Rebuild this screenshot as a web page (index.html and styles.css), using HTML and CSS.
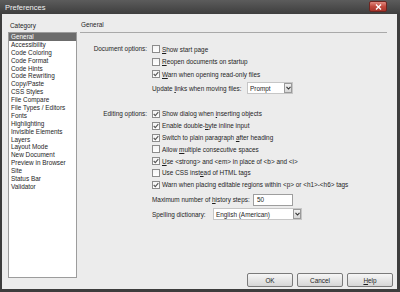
FILE: index.html
```html
<!DOCTYPE html>
<html lang="en">
<head>
  <meta charset="UTF-8" />
  <title>Preferences</title>
  <link rel="stylesheet" href="styles.css">
</head>
<body>
  <div class="window">
    <div class="titlebar">
      <span class="title">Preferences</span>
      <span class="close">
        <svg width="7" height="6" viewBox="0 0 7 6"><path d="M1 0.5 L6 5.5 M6 0.5 L1 5.5" stroke="#fff" stroke-width="1.4" fill="none"/></svg>
      </span>
    </div>

    <div class="frame">
      <!-- Category list -->
      <div class="sidebar">
        <div class="side-label">Category</div>
        <ul class="category-list">
          <li class="selected">General</li>
          <li>Accessibility</li>
          <li>Code Coloring</li>
          <li>Code Format</li>
          <li>Code Hints</li>
          <li>Code Rewriting</li>
          <li>Copy/Paste</li>
          <li>CSS Styles</li>
          <li>File Compare</li>
          <li>File Types / Editors</li>
          <li>Fonts</li>
          <li>Highlighting</li>
          <li>Invisible Elements</li>
          <li>Layers</li>
          <li>Layout Mode</li>
          <li>New Document</li>
          <li>Preview in Browser</li>
          <li>Site</li>
          <li>Status Bar</li>
          <li>Validator</li>
        </ul>
      </div>

      <!-- General panel -->
      <div class="main">
        <div class="main-title">General</div>

        <div class="section doc-section">
          <div class="section-label">Document options:</div>
          <div class="options">
            <div class="opt"><span class="box"></span><span><u>S</u>how start page</span></div>
            <div class="opt"><span class="box"></span><span><u>R</u>eopen documents on startup</span></div>
            <div class="opt"><span class="box checked"><svg width="6" height="6" viewBox="0 0 6 6"><path d="M0.7 3 L2.3 4.6 L5.3 1.2" stroke="#555" stroke-width="1.1" fill="none"/></svg></span><span><u>W</u>arn when opening read-only files</span></div>
            <div class="field-row update-row">
              <span class="field-label">Update <u>l</u>inks when moving files:</span>
              <span class="select prompt-select">
                <span>Prompt</span>
                <span class="arrow"><svg width="5" height="4" viewBox="0 0 5 4"><path d="M0.5 0.8 L2.5 3 L4.5 0.8" stroke="#333" stroke-width="1.1" fill="none"/></svg></span>
              </span>
            </div>
          </div>
        </div>

        <div class="section edit-section">
          <div class="section-label">Editing options:</div>
          <div class="options">
            <div class="opt"><span class="box checked"><svg width="6" height="6" viewBox="0 0 6 6"><path d="M0.7 3 L2.3 4.6 L5.3 1.2" stroke="#555" stroke-width="1.1" fill="none"/></svg></span><span>Show dialog when <u>i</u>nserting objects</span></div>
            <div class="opt"><span class="box checked"><svg width="6" height="6" viewBox="0 0 6 6"><path d="M0.7 3 L2.3 4.6 L5.3 1.2" stroke="#555" stroke-width="1.1" fill="none"/></svg></span><span>Enable double-<u>b</u>yte inline input</span></div>
            <div class="opt"><span class="box checked"><svg width="6" height="6" viewBox="0 0 6 6"><path d="M0.7 3 L2.3 4.6 L5.3 1.2" stroke="#555" stroke-width="1.1" fill="none"/></svg></span><span>Switch to plain paragraph <u>a</u>fter heading</span></div>
            <div class="opt"><span class="box"></span><span>Allow <u>m</u>ultiple consecutive spaces</span></div>
            <div class="opt"><span class="box checked"><svg width="6" height="6" viewBox="0 0 6 6"><path d="M0.7 3 L2.3 4.6 L5.3 1.2" stroke="#555" stroke-width="1.1" fill="none"/></svg></span><span><u>U</u>se &lt;strong&gt; and &lt;em&gt; in place of &lt;b&gt; and &lt;i&gt;</span></div>
            <div class="opt"><span class="box"></span><span>Use CSS inst<u>e</u>ad of HTML tags</span></div>
            <div class="opt"><span class="box checked"><svg width="6" height="6" viewBox="0 0 6 6"><path d="M0.7 3 L2.3 4.6 L5.3 1.2" stroke="#555" stroke-width="1.1" fill="none"/></svg></span><span>Warn when placing editable regions within &lt;p&gt; or &lt;h1&gt;-&lt;h6&gt; tags</span></div>
            <div class="field-row history-row">
              <span class="field-label history-label">Maximum number of <u>h</u>istory steps:</span>
              <span class="text-input">50</span>
            </div>
            <div class="field-row spell-row">
              <span class="field-label spell-label">Spelling dictionary:</span>
              <span class="select spell-select">
                <span>English (American)</span>
                <span class="arrow"><svg width="5" height="4" viewBox="0 0 5 4"><path d="M0.5 0.8 L2.5 3 L4.5 0.8" stroke="#333" stroke-width="1.1" fill="none"/></svg></span>
              </span>
            </div>
          </div>
        </div>

        <div class="buttons">
          <button class="btn">OK</button>
          <button class="btn">Cancel</button>
          <button class="btn"><u>H</u>elp</button>
        </div>
      </div>
    </div>
  </div>
</body>
</html>
```

FILE: styles.css
```css
* {
  box-sizing: border-box;
}

body {
  margin: 0;
  font-family: 'Liberation Sans', Arial, sans-serif;
  font-size: 6.4px;
  color: #1e1e1e;
  background: #ececec;
}

.window {
  width: 400px;
  height: 292px;
  display: flex;
  flex-direction: column;
  background: #ececec;
}

/* Title bar */
.titlebar {
  height: 14px;
  display: flex;
  justify-content: space-between;
  align-items: flex-start;
  padding: 0 13px 0 5px;
  background: linear-gradient(#5c5c5c, #3e3e3e);
}

.title {
  color: #f2f2f2;
  font-size: 7.5px;
  line-height: 15px;
}

.close {
  margin-top: 1px;
  width: 18px;
  height: 11px;
  border: 1px solid #6e2520;
  border-radius: 2px;
  background: linear-gradient(#e08a80, #c24a3e 50%, #a8342a);
  display: flex;
  align-items: center;
  justify-content: center;
}

/* Frame */
.frame {
  flex: 1;
  display: flex;
  border-style: solid;
  border-color: #3d3d3d;
  border-width: 0 3px 3px 2px;
}

.sidebar {
  width: 69px;
  margin-left: 6px;
  display: flex;
  flex-direction: column;
}

.side-label {
  height: 18px;
  padding: 7.5px 0 0 2px;
  line-height: 8px;
}

.category-list {
  height: 246px;
  margin: 0;
  padding: 0;
  list-style: none;
  background: #fff;
  border: 1px solid #9c9c9c;
}

.category-list li {
  height: 7.9px;
  line-height: 7.9px;
  padding-left: 2px;
  white-space: nowrap;
}

.category-list .selected {
  background: #6c6c6c;
  color: #fff;
}

/* Main panel */
.main {
  flex: 1;
  margin: 0 4px 0 3px;
  display: flex;
  flex-direction: column;
}

.main-title {
  height: 19px;
  padding: 7px 0 0 1px;
  line-height: 8px;
  margin-right: 6px;
  border-bottom: 1px solid #a9a9a9;
}

.section {
  display: grid;
  grid-template-columns: 72px 1fr;
}

.doc-section {
  margin-top: 9.75px;
}

.edit-section {
  margin-top: 12.35px;
}

.section-label {
  text-align: right;
  padding-right: 5px;
  white-space: nowrap;
}

.doc-section .section-label {
  line-height: 12.5px;
}

.edit-section .section-label {
  line-height: 11.8px;
}

.opt {
  display: flex;
  align-items: center;
  white-space: nowrap;
}

.doc-section .opt {
  height: 12.5px;
}

.edit-section .opt {
  height: 11.8px;
}

.box {
  width: 8px;
  height: 8px;
  margin-right: 2px;
  border: 1px solid #8c8c8c;
  background: linear-gradient(#f4f4f4, #ffffff);
  display: flex;
  align-items: center;
  justify-content: center;
}

.field-row {
  display: flex;
  align-items: center;
  white-space: nowrap;
}

.update-row {
  height: 15.5px;
}

.update-row .field-label {
  width: 95px;
}

.history-row {
  height: 14px;
  margin-top: 2.3px;
}

.history-label {
  width: 101px;
}

.spell-row {
  height: 15px;
}

.spell-label {
  width: 61px;
}

.select {
  height: 12px;
  display: flex;
  align-items: center;
  justify-content: space-between;
  padding-left: 2px;
  background: #fff;
  border: 1px solid #c6c6c6;
}

.prompt-select {
  width: 46px;
}

.spell-select {
  width: 89px;
}

.arrow {
  width: 8px;
  height: 10px;
  border: 1px solid #9a9a9a;
  background: linear-gradient(#f0f0f0, #d6d6d6);
  display: flex;
  align-items: center;
  justify-content: center;
}

.text-input {
  width: 40px;
  height: 12px;
  padding-left: 3px;
  line-height: 10px;
  background: #fff;
  border: 1px solid #9e9e9e;
}

/* Buttons */
.buttons {
  margin-top: auto;
  margin-bottom: 2px;
  display: flex;
  justify-content: flex-end;
  gap: 4px;
}

.btn {
  width: 46px;
  height: 14px;
  padding: 0;
  font-family: inherit;
  font-size: 6.4px;
  color: #1e1e1e;
  border: 1px solid #7a7a7a;
  border-radius: 2px;
  background: linear-gradient(#f6f6f6, #e6e6e6 50%, #d6d6d6);
}
```
